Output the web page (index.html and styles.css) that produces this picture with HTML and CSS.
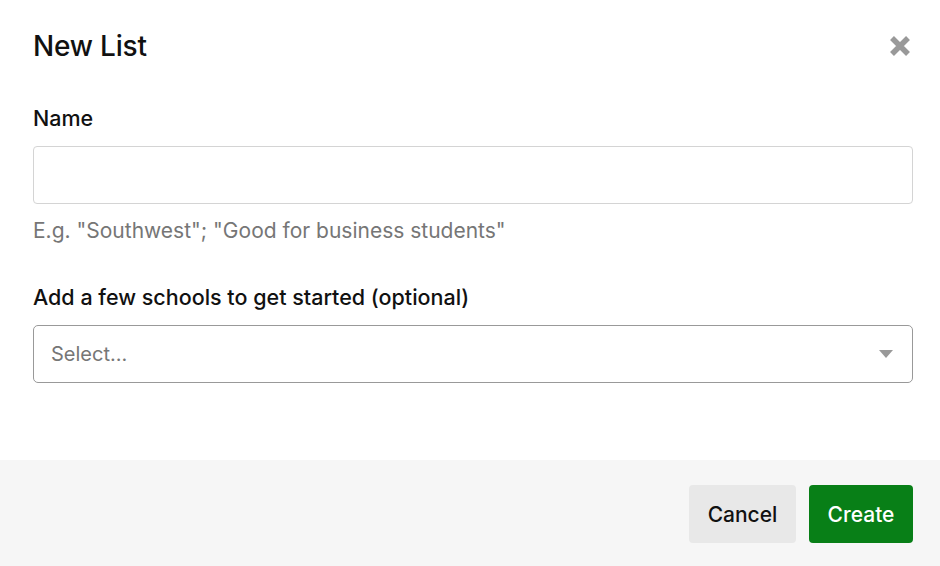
FILE: index.html
```html
<!DOCTYPE html>
<html>
<head>
<meta charset="utf-8">
<link rel="stylesheet" href="styles.css">
</head>
<body>
<div class="modal">
  <div class="body">
    <div class="header">
      <h1 class="title">New List</h1>
      <button class="close" aria-label="Close">
        <svg width="22" height="22" viewBox="0 0 22 22"><path d="M3 3 L19 19 M19 3 L3 19" stroke="#999" stroke-width="5.5" stroke-linecap="butt"/></svg>
      </button>
    </div>
    <div class="field">
      <label class="label">Name</label>
      <input class="input" type="text">
      <div class="hint">E.g. "Southwest"; "Good for business students"</div>
    </div>
    <div class="field">
      <label class="label">Add a few schools to get started (optional)</label>
      <div class="select">
        <span class="placeholder">Select...</span>
        <svg width="16" height="10" viewBox="0 0 16 10"><path d="M1 1 L15 1 L8 9 Z" fill="#999"/></svg>
      </div>
    </div>
  </div>
  <div class="footer">
    <button class="btn cancel">Cancel</button>
    <button class="btn create">Create</button>
  </div>
</div>
</body>
</html>
```
FILE: styles.css
```css
html, body {
  margin: 0;
  padding: 0;
  background: #fff;
  font-family: Inter, "Liberation Sans", Arial, sans-serif;
  color: #111;
}
.modal {
  width: 940px;
  height: 566px;
  display: flex;
  flex-direction: column;
}
.body {
  flex: 1;
  padding: 0 29px 0 33px;
}
.header {
  display: flex;
  align-items: center;
  justify-content: space-between;
  height: 92px;
}
.title {
  margin: 0;
  font-size: 28px;
  font-weight: 500;
  letter-spacing: -0.2px;
  color: #111;
}
.close {
  border: 0;
  background: none;
  padding: 0;
  width: 22px;
  height: 22px;
  display: flex;
}
.field {
  display: flex;
  flex-direction: column;
}
.label {
  font-size: 21.5px;
  font-weight: 500;
  line-height: 24px;
  margin-top: 14px;
  margin-bottom: 16px;
  color: #111;
}
.input {
  box-sizing: border-box;
  width: 880px;
  height: 58px;
  border: 1px solid #d4d4d4;
  border-radius: 4px;
  font-size: 20px;
  padding: 0 16px;
}
.hint {
  font-size: 21px;
  color: #767676;
  line-height: 24px;
  margin-top: 15px;
  margin-bottom: 28px;
}
.select {
  box-sizing: border-box;
  width: 880px;
  height: 58px;
  border: 1px solid #999;
  border-radius: 5px;
  display: flex;
  align-items: center;
  justify-content: space-between;
  padding: 0 18px 0 17px;
}
.placeholder {
  font-size: 20px;
  color: #767676;
}
.footer {
  box-sizing: border-box;
  height: 106px;
  background: #f6f6f6;
  display: flex;
  align-items: center;
  justify-content: flex-end;
  gap: 13px;
  padding: 2px 27px 0;
}
.btn {
  height: 58px;
  border: 0;
  border-radius: 4px;
  font-family: Inter, "Liberation Sans", Arial, sans-serif;
  font-size: 21px;
  font-weight: 500;
  padding: 0 10px;
}
.cancel {
  background: #e8e8e8;
  color: #111;
  width: 107px;
}
.create {
  background: #087f17;
  color: #fff;
  width: 104px;
}
```
